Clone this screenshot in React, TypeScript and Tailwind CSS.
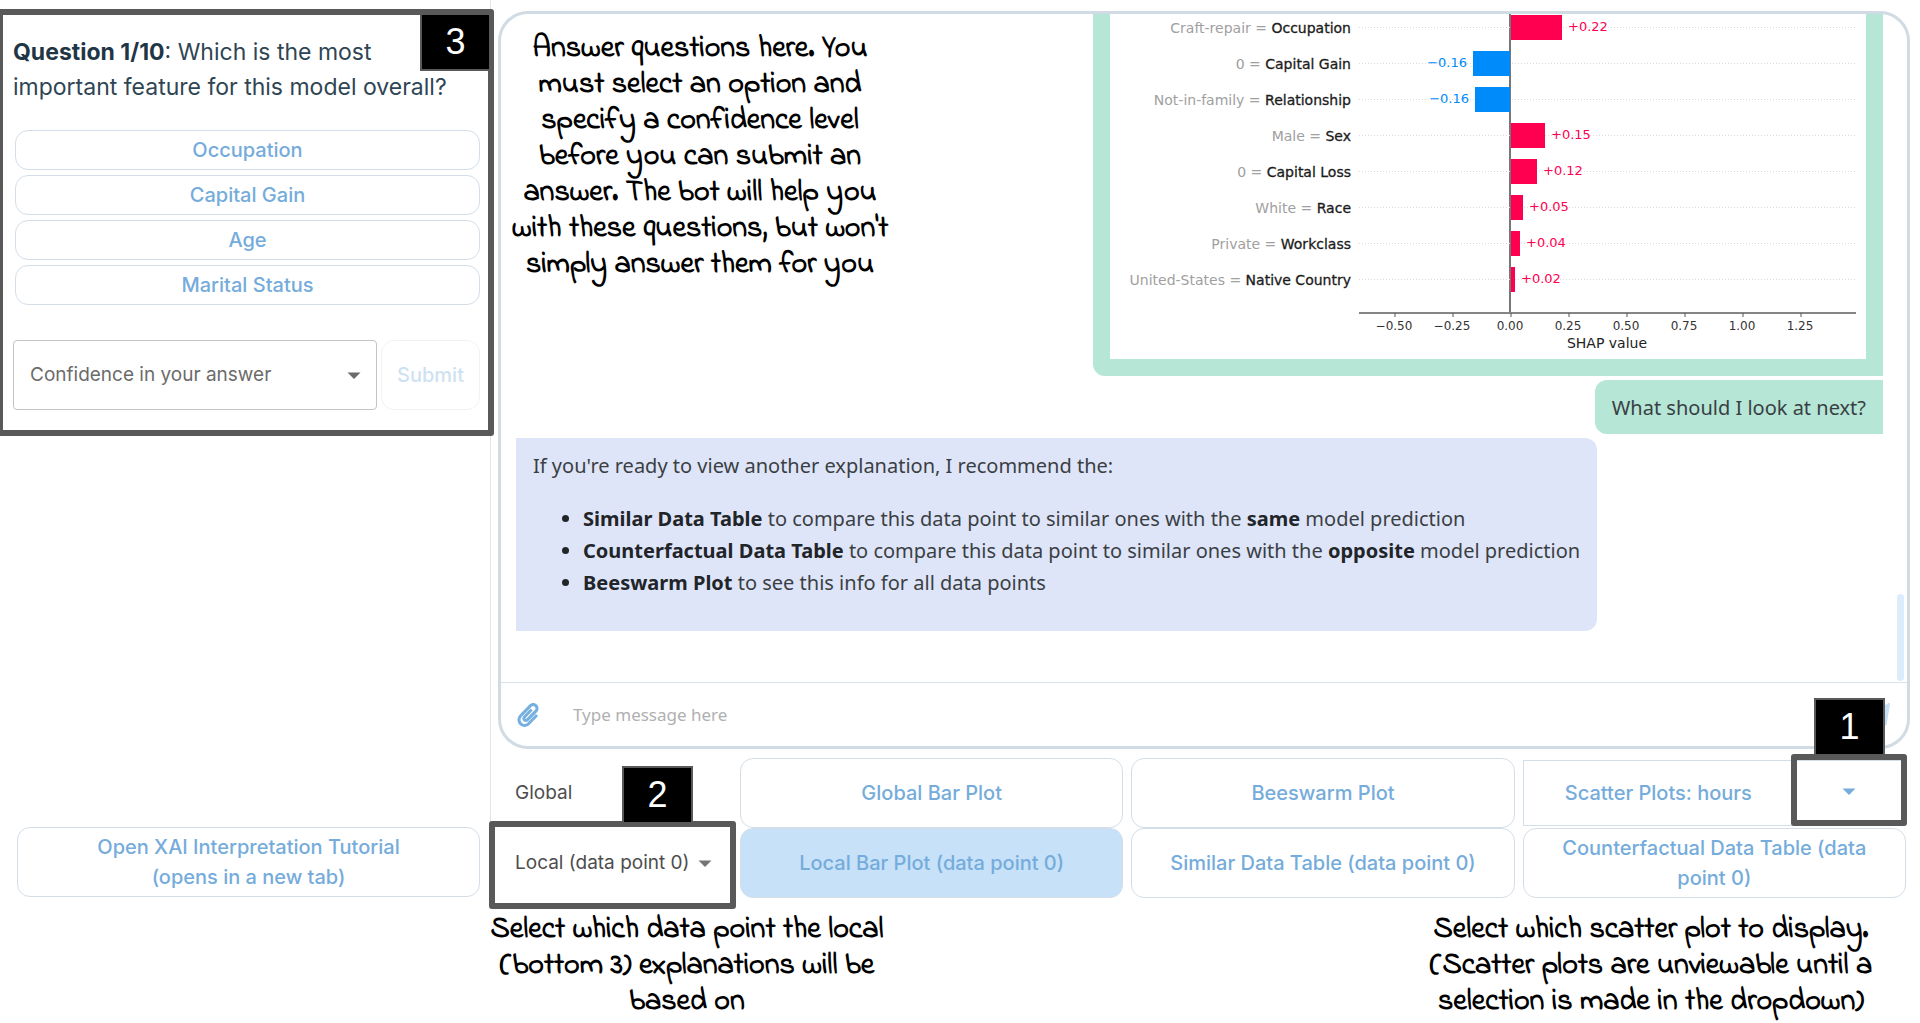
import React, { useState } from 'react';
import { FaPaperclip, FaPaperPlane } from 'react-icons/fa';

type Row = { value: string; feature: string; shap: string; from: number; to: number };

const rows: Row[] = [
  { value: 'Craft-repair', feature: 'Occupation', shap: '+0.22', from: 401, to: 452 },
  { value: '0', feature: 'Capital Gain', shap: '−0.16', from: 363, to: 400 },
  { value: 'Not-in-family', feature: 'Relationship', shap: '−0.16', from: 365, to: 400 },
  { value: 'Male', feature: 'Sex', shap: '+0.15', from: 401, to: 435 },
  { value: '0', feature: 'Capital Loss', shap: '+0.12', from: 401, to: 427 },
  { value: 'White', feature: 'Race', shap: '+0.05', from: 401, to: 413 },
  { value: 'Private', feature: 'Workclass', shap: '+0.04', from: 401, to: 410 },
  { value: 'United-States', feature: 'Native Country', shap: '+0.02', from: 401, to: 405 },
];

const ticks = ['−0.50', '−0.25', '0.00', '0.25', '0.50', '0.75', '1.00', '1.25'];

function ShapChart() {
  return (
    <svg
      width="756"
      height="359"
      viewBox="0 0 756 359"
      role="img"
      aria-label="Local SHAP values for data point 0"
      className="block bg-white font-['DejaVu_Sans',sans-serif]"
    >
      <line x1="400" x2="400" y1="0" y2="313" stroke="#777" strokeWidth="2" />
      {rows.map((r, i) => {
        const y = 28 + i * 36;
        const positive = r.shap.startsWith('+');
        const colour = positive ? '#ff0051' : '#008bfb';
        return (
          <g key={r.feature}>
            <line x1="249" x2="745" y1={y - 0.5} y2={y - 0.5} stroke="#dcdcdc" strokeDasharray="1 2" />
            <text x="241" y={y + 5} textAnchor="end" fontSize="14" fill="#a0a0a0">
              {r.value} = <tspan fill="#1c1c1c" stroke="#1c1c1c" strokeWidth="0.3">{r.feature}</tspan>
            </text>
            <rect x={r.from} y={y - 13} width={r.to - r.from} height="25" fill={colour} />
            <text
              x={positive ? r.to + 6 : r.from - 6}
              y={y + 3}
              textAnchor={positive ? 'start' : 'end'}
              fontSize="13"
              fill={colour}
            >
              {r.shap}
            </text>
          </g>
        );
      })}
      <line x1="249" x2="746" y1="313" y2="313" stroke="#858585" strokeWidth="2" />
      {ticks.map((t, i) => (
        <g key={t}>
          <line x1={285 + i * 58} x2={285 + i * 58} y1="313" y2="317" stroke="#555" />
          <text x={284 + i * 58} y="330" textAnchor="middle" fontSize="12" fill="#333">
            {t}
          </text>
        </g>
      ))}
      <text x="497" y="348" textAnchor="middle" fontSize="14" fill="#222">
        SHAP value
      </text>
    </svg>
  );
}

function Caret({ className }: { className: string }) {
  return (
    <svg width="14" height="7" viewBox="0 0 14 7" className={`pointer-events-none ${className}`} aria-hidden="true">
      <path d="M0.5 0.5h13L7 7z" fill="currentColor" />
    </svg>
  );
}

function Badge({ n, className }: { n: number; className: string }) {
  return (
    <div
      className={`absolute z-30 flex h-[58px] w-[71px] items-center justify-center border-2 border-[#595959] bg-black font-['Liberation_Sans',sans-serif] text-4xl text-white ${className}`}
    >
      {n}
    </div>
  );
}

function Frame({ className }: { className: string }) {
  return <div className={`pointer-events-none absolute z-20 rounded-[3px] border-6 border-[#595959] ${className}`} />;
}

function Note({ lines, className }: { lines: string[]; className: string }) {
  return (
    <p
      className={`text-center font-['Indie_Flower',cursive] text-[30px] leading-9 font-bold whitespace-nowrap text-black [font-variant-ligatures:none] ${className}`}
    >
      {lines.map((l) => (
        <span key={l} className="block">
          {l}
        </span>
      ))}
    </p>
  );
}

const pill =
  'flex items-center justify-center rounded-[13px] border border-[#d3dee8] text-center text-xl leading-[30px] font-medium text-[#75acdb]';

export default function App() {
  const [confidence, setConfidence] = useState('');
  const answers = ['Occupation', 'Capital Gain', 'Age', 'Marital Status'];

  return (
    <div className="flex h-screen flex-col overflow-hidden bg-white font-[Inter,sans-serif]">
      <div className="flex min-h-0 flex-1">
        <aside className="flex w-[491px] shrink-0 flex-col justify-between border-r border-[#e2e4e6] pt-[9px]">
          <section className="relative px-[13px] pt-[26px] pb-[26px]">
            <Frame className="inset-y-0 -right-1 -left-[3px]" />
            <Badge n={3} className="top-1 -right-px" />
            <h2 className="text-[23px] leading-[35px] font-normal text-[#2f4554]">
              <strong className="font-bold text-[#1f3646]">Question 1/10</strong>: Which is the most
              <br />
              important feature for this model overall?
            </h2>
            <div className="mt-[25px] mr-[-3px] ml-[2px] flex flex-col gap-[5px]">
              {answers.map((a) => (
                <button key={a} type="button" className={`${pill} h-10`}>
                  {a}
                </button>
              ))}
            </div>
            <div className="mt-[35px] mr-[-3px] flex gap-1">
              <div className="relative flex-1 text-[#6b6b6b]">
                <select
                  aria-label="Confidence in your answer"
                  value={confidence}
                  onChange={(e) => setConfidence(e.target.value)}
                  className="h-[70px] w-full appearance-none rounded border border-[#c4c4c4] bg-white px-4 text-[19px]"
                >
                  <option value="">Confidence in your answer</option>
                  <option value="low">Low</option>
                  <option value="high">High</option>
                </select>
                <Caret className="absolute top-8 right-4" />
              </div>
              <button type="button" disabled className={`${pill} w-[99px] opacity-35`}>
                Submit
              </button>
            </div>
          </section>
          <a href="#tutorial" className={`${pill} mr-[10px] mb-px ml-[17px] h-[70px]`}>
            Open XAI Interpretation Tutorial
            <br />
            (opens in a new tab)
          </a>
        </aside>

        <main className="flex min-w-0 flex-1 flex-col pt-[11px]">
          <section className="relative mr-[10px] ml-[7px] flex min-h-0 flex-1 flex-col rounded-[30px] border-3 border-[#d0dbe4]">
            <Note
              className="absolute top-[17px] left-[11px] w-[376px]"
              lines={[
                'Answer questions here. You',
                'must select an option and',
                'specify a confidence level',
                'before you can submit an',
                'answer. The bot will help you',
                "with these questions, but won't",
                'simply answer them for you',
              ]}
            />
            <div className="flex min-h-0 flex-1 flex-col justify-end gap-1 overflow-hidden pr-6 pb-[51px] pl-[15px] font-['Noto_Sans',sans-serif] text-xl leading-8 text-[#3a3f44]">
              <div className="self-end rounded-l-xl bg-[#b5e6d6] p-[17px]">
                <ShapChart />
              </div>
              <p className="self-end rounded-l-xl bg-[#b5e6d6] px-[17px] pt-3 pb-[10px]">What should I look at next?</p>
              <div className="self-start rounded-r-xl bg-[#dfe5f8] px-[17px] pt-3 pb-8">
                <p>If you're ready to view another explanation, I recommend the:</p>
                <ul className="mt-[21px] list-disc pl-[50px] marker:text-[#212529] [&_strong]:text-[#212529]">
                  <li>
                    <strong>Similar Data Table</strong> to compare this data point to similar ones with the{' '}
                    <strong>same</strong> model prediction
                  </li>
                  <li>
                    <strong>Counterfactual Data Table</strong> to compare this data point to similar ones with the{' '}
                    <strong>opposite</strong> model prediction
                  </li>
                  <li>
                    <strong>Beeswarm Plot</strong> to see this info for all data points
                  </li>
                </ul>
              </div>
            </div>
            <div className="absolute right-[3px] bottom-[65px] h-[87px] w-[7px] rounded-full bg-[#dbedfc]" />
            <form className="flex h-16 items-center border-t border-[#d8e2ea] pr-[17px] pl-[15px]">
              <button type="button" aria-label="Attach a file" className="text-[#75b0e0]">
                <FaPaperclip size={24} />
              </button>
              <input
                type="text"
                aria-label="Message"
                placeholder="Type message here"
                className="ml-[33px] min-w-0 flex-1 font-['Noto_Sans',sans-serif] text-[17px] outline-none placeholder:text-[#b0b0b0]"
              />
              <button type="button" aria-label="Send" className="text-[#c6e0f7]">
                <FaPaperPlane size={24} />
              </button>
            </form>
          </section>

          <div className="mt-[9px] mr-[14px] grid grid-cols-[241px_repeat(3,minmax(0,1fr))] grid-rows-[70px_70px] gap-x-2">
            <div className="relative flex items-center pl-6 text-[19px] text-[#4d4d4d]">
              Global
              <Badge n={2} className="bottom-1 left-[131px]" />
            </div>
            <button type="button" className={pill}>Global Bar Plot</button>
            <button type="button" className={pill}>Beeswarm Plot</button>
            <div className="relative my-[2px] flex border border-[#d3dee8] text-[#75acdb]">
              <button type="button" className="flex-1 text-xl font-medium">
                Scatter Plots: hours
              </button>
              <button type="button" aria-label="Choose scatter plot" className="flex w-[112px] items-center justify-center">
                <Caret className="-mt-1" />
              </button>
              <Frame className="-top-[7px] -right-[2px] -bottom-px w-[116px]" />
              <Badge n={1} className="right-5 bottom-[69px]" />
            </div>
            <div className="relative text-[#4d4d4d]">
              <select
                aria-label="Data point for local explanations"
                className="h-full w-full appearance-none bg-transparent pl-6 text-[19px]"
              >
                <option>Local (data point 0)</option>
                <option>Local (data point 1)</option>
              </select>
              <Caret className="absolute top-8 right-5 text-[#757575]" />
              <Frame className="-top-[7px] -right-1 -bottom-[11px] -left-[2px]" />
            </div>
            <button type="button" className={`${pill} bg-[#c6e1f8]`}>Local Bar Plot (data point 0)</button>
            <button type="button" className={pill}>Similar Data Table (data point 0)</button>
            <button type="button" className={`${pill} px-8`}>Counterfactual Data Table (data point 0)</button>
          </div>
        </main>
      </div>

      <div className="flex shrink-0 justify-between pt-[14px] pr-[46px] pb-[3px] pl-[490px]">
        <Note
          className="w-[394px]"
          lines={['Select which data point the local', '(bottom 3) explanations will be', 'based on']}
        />
        <Note
          className="w-[446px]"
          lines={[
            'Select which scatter plot to display.',
            '(Scatter plots are unviewable until a',
            'selection is made in the dropdown)',
          ]}
        />
      </div>
    </div>
  );
}
